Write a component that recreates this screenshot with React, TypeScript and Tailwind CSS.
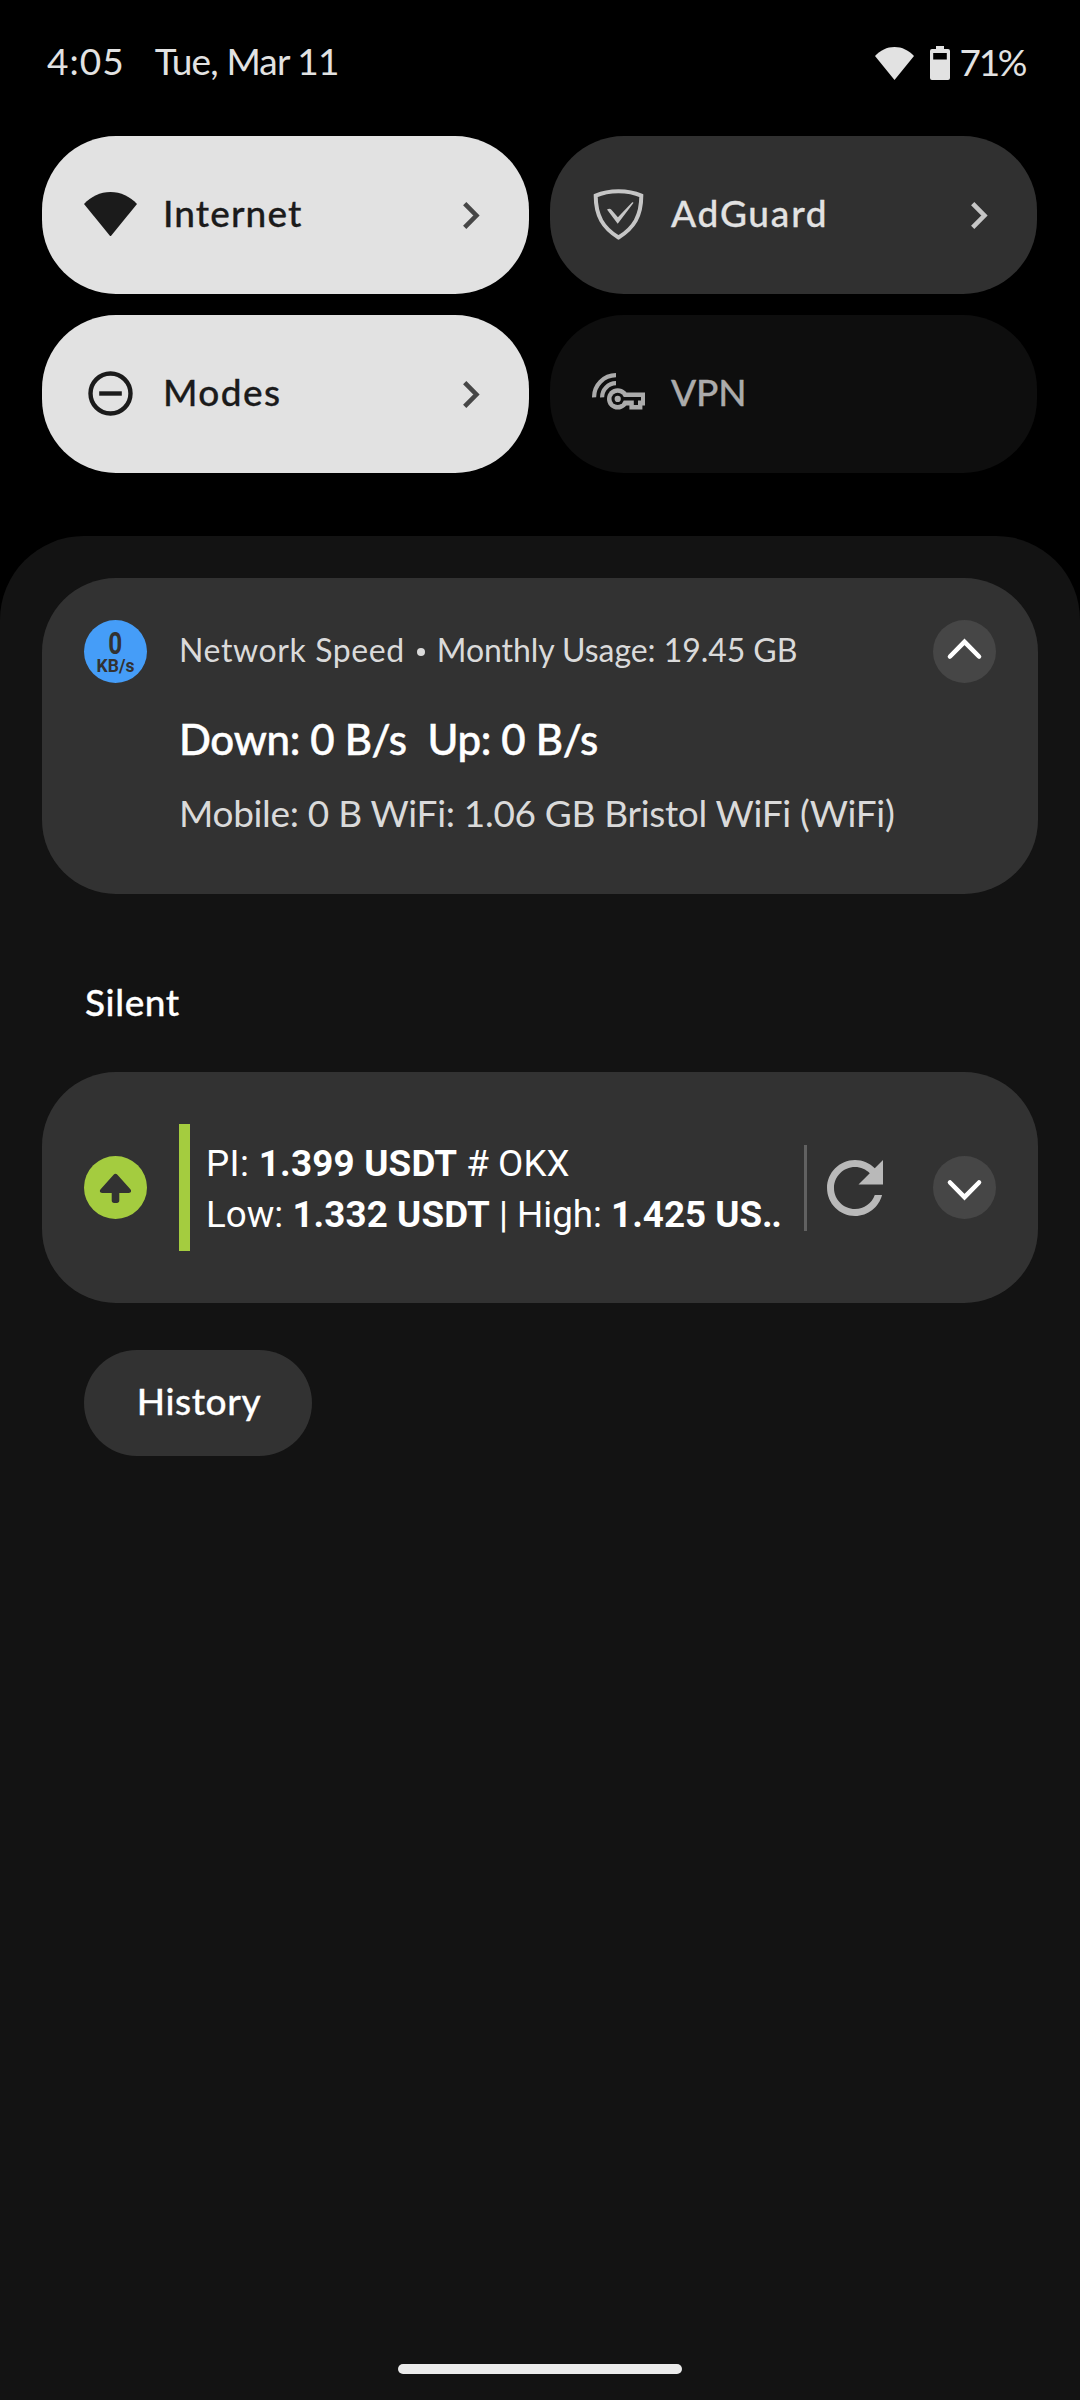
import type { ReactNode } from "react";
import clsx from "clsx";

function WifiIcon({ className }: { className?: string }) {
  return (
    <svg viewBox="0 0 53 44.5" className={className} fill="currentColor" preserveAspectRatio="none">
      <path d="M0 12C7 4.6 16.2 0 26.5 0S46 4.6 53 12L26.5 44.5z" />
    </svg>
  );
}

function BatteryIcon() {
  return (
    <svg viewBox="0 0 20 34" className="w-5 h-[34px]" fill="currentColor">
      <path
        fillRule="evenodd"
        d="M6 0h8v3h4a2 2 0 0 1 2 2v27a2 2 0 0 1-2 2H2a2 2 0 0 1-2-2V5a2 2 0 0 1 2-2h4zM3.2 7v6.4h13.6V7z"
      />
    </svg>
  );
}

function ModesIcon() {
  return (
    <svg viewBox="0 0 53 53" className="w-[53px] h-[53px] mb-[2px]" fill="none" stroke="currentColor" strokeWidth="4.4">
      <circle cx="26.5" cy="26.5" r="20" />
      <path d="M15.2 26.5h22.6" />
    </svg>
  );
}

function ShieldIcon() {
  return (
    <svg viewBox="0 0 53 53" className="w-[53px] h-[53px] mb-[2px]">
      <path
        d="M3.7 7.6C17 1.7 36 1.7 49.3 7.6C49.3 28 42 40 26.5 49.5C11 40 3.7 28 3.7 7.6z"
        fill="none"
        stroke="currentColor"
        strokeWidth="4"
      />
      <path
        d="M15 21.6c1.6-1.3 3.3-1.3 4.4.2l6.5 7.4L40 14.6c.6-.6 1.6-.5 1.4.4L25.7 35.8z"
        fill="currentColor"
      />
    </svg>
  );
}

function VpnIcon() {
  return (
    <svg viewBox="0 0 53 53" className="w-[53px] h-[53px] mb-[2px]">
      <g fill="none" stroke="currentColor" strokeWidth="4.2">
        <path d="M2.1 30.4A22 22 0 0 1 24 8.1" />
        <path d="M10.1 30.4A14 14 0 0 1 24 16.2" />
      </g>
      <circle cx="25.7" cy="31.9" r="10.7" fill="currentColor" />
      <path d="M31 25.4h22v13h-2.6v4h-13v-4H31z" fill="currentColor" />
      <circle cx="25.7" cy="31.9" r="6.2" fill="#0e0e0e" />
      <path d="M29 30h20v3.6h-3v4.4h-4.2v-4.4H29z" fill="#0e0e0e" />
      <circle cx="25.7" cy="31.9" r="3.1" fill="currentColor" />
    </svg>
  );
}

function ChevronRight() {
  return (
    <svg viewBox="0 0 17 27" className="w-[17px] h-[27px]" fill="none" stroke="currentColor" strokeWidth="4.6">
      <path d="M1.7 1.7L13.4 13.5L1.7 25.3" />
    </svg>
  );
}

function RefreshIcon() {
  return (
    <svg viewBox="0 0 24 24" className="w-[84px] h-[84px] shrink-0 text-[#b9b9b9]" fill="currentColor">
      <path d="M17.65 6.35C16.2 4.9 14.21 4 12 4c-4.42 0-7.99 3.58-7.99 8s3.57 8 7.99 8c3.73 0 6.84-2.55 7.73-6h-2.08c-.82 2.33-3.04 4-5.65 4-3.31 0-6-2.69-6-6s2.69-6 6-6c1.66 0 3.14.69 4.22 1.78L13 11h7V4l-2.35 2.35z" />
    </svg>
  );
}

function ExpandButton({ open }: { open?: boolean }) {
  return (
    <button className="w-[63px] h-[63px] shrink-0 rounded-full bg-[#464646] flex items-center justify-center">
      <svg
        viewBox="0 0 63 63"
        className={clsx("w-[63px] h-[63px]", open && "rotate-180")}
        fill="none"
        stroke="white"
        strokeWidth="4.6"
        strokeLinecap="round"
      >
        <path d="M17 26.5L31.5 41.2L46 26.5" />
      </svg>
    </button>
  );
}

type TileProps = {
  icon: ReactNode;
  label: string;
  tracking: string;
  variant: "on" | "off" | "disabled";
};

function Tile({ icon, label, tracking, variant }: TileProps) {
  return (
    <div
      className={clsx(
        "h-[158px] rounded-[74px] flex items-center pl-[42px] pr-[49px]",
        variant === "on" && "bg-[#e2e2e2] text-[#1b1b1b]",
        variant === "off" && "bg-[#303030] text-[#c6c6c6]",
        variant === "disabled" && "bg-[#0e0e0e] text-[#ababab]"
      )}
    >
      {icon}
      <span
        className={clsx(
          "ml-[26px] pb-1 text-[37px] font-medium [-webkit-text-stroke:0.3px_currentColor]",
          tracking,
          variant === "off" && "text-[#e2e2e2]"
        )}
      >
        {label}
      </span>
      {variant !== "disabled" && (
        <span className={clsx("ml-auto", variant === "on" && "text-[#464646]")}>
          <ChevronRight />
        </span>
      )}
    </div>
  );
}

export default function App() {
  return (
    <div className="w-[1080px] h-[2400px] bg-black flex flex-col font-['Lato',sans-serif] whitespace-nowrap overflow-hidden">
      <div className="h-[126px] pl-[47px] pr-[55px] flex items-center text-[37px] text-[#e2e2e2]">
        <span className="pb-1 tracking-[1px]">4:05</span>
        <span className="pb-1 ml-[30px] tracking-[-0.85px]">Tue, Mar 11</span>
        <div className="ml-auto flex items-center">
          <WifiIcon className="w-[39px] h-[33px]" />
          <span className="ml-4">
            <BatteryIcon />
          </span>
          <span className="pb-[2px] ml-[10px] tracking-[-2.4px]">71%</span>
        </div>
      </div>

      <div className="mt-[10px] px-[42px] grid grid-cols-[487px_487px] gap-x-[21px] gap-y-[21px]">
        <Tile icon={<WifiIcon className="w-[53px] h-[44.5px] mb-[2px]" />} label="Internet" tracking="tracking-[1.1px]" variant="on" />
        <Tile icon={<ShieldIcon />} label="AdGuard" tracking="tracking-[1.8px]" variant="off" />
        <Tile icon={<ModesIcon />} label="Modes" tracking="tracking-[1.4px]" variant="on" />
        <Tile icon={<VpnIcon />} label="VPN" tracking="tracking-[-0.2px]" variant="disabled" />
      </div>

      <div className="mt-[63px] flex-1 bg-[#131313] rounded-t-[84px] px-[42px] pt-[42px] flex flex-col">
        <div className="h-[316px] rounded-[74px] bg-[#323232] px-[42px] pt-[42px]">
          <div className="flex items-center h-[63px]">
            <div className="w-[63px] h-[63px] rounded-full bg-[#459df8] text-[#323232] flex flex-col items-center pt-[10px] font-['Roboto',sans-serif] font-bold">
              <span className="text-[32px] leading-[26px] scale-x-[0.76]">0</span>
              <span className="text-[17.5px] leading-[20px]">KB/s</span>
            </div>
            <div className="ml-8 pb-[3px] flex items-center text-[32px] text-[#dadada]">
              <span className="tracking-[0.6px]">Network Speed</span>
              <span className="mx-[12px] mt-1 w-[8px] h-[8px] rounded-full bg-[#dadada]" />
              <span className="tracking-[-0.06px]">Monthly Usage: 19.45 GB</span>
            </div>
            <div className="ml-auto">
              <ExpandButton open />
            </div>
          </div>
          <div className="ml-[95px] mt-[29px] text-[42px] leading-[54px] font-medium text-white tracking-[-0.3px] [-webkit-text-stroke:0.5px_currentColor]">
            Down: 0 B/s&nbsp; Up: 0 B/s
          </div>
          <div className="ml-[95px] mt-[23px] text-[37px] leading-[48px] text-[#dadada] tracking-[-0.31px]">
            Mobile: 0 B WiFi: 1.06 GB Bristol WiFi (WiFi)
          </div>
        </div>

        <h2 className="h-[178px] pt-[37px] pl-[43px] flex items-center text-[37px] font-medium text-white tracking-[0.6px] [-webkit-text-stroke:0.3px_currentColor]">
          Silent
        </h2>

        <div className="h-[231px] rounded-[74px] bg-[#323232] px-[42px] flex items-center">
          <svg viewBox="0 0 63 63" className="w-[63px] h-[63px] shrink-0">
            <circle cx="31.5" cy="31.5" r="31.5" fill="#a4cc3f" />
            <path
              d="M29.6 18.7c1.1-1.2 2.7-1.2 3.8 0l13 14.6c1.4 1.7.6 3.7-1.5 3.7h-9.6v7.5c0 1.6-.9 2.5-2.4 2.5h-2.8c-1.5 0-2.4-.9-2.4-2.5V37h-9.6c-2.1 0-2.9-2-1.5-3.7z"
              fill="#323232"
            />
          </svg>
          <div className="ml-8 w-[11px] h-[127px] shrink-0 bg-[#a4cc3f]" />
          <div className="ml-4 pt-[2px] w-[598px] shrink-0 font-['Roboto',sans-serif] text-[36.75px] leading-[51px] text-white">
            <div>
              <span className="tracking-[0.4px]">PI: </span>
              <b className="tracking-[0.2px]">1.399 USDT</b> # OKX
            </div>
            <div>
              Low: <b className="tracking-[0.1px]">1.332 USDT</b> | High:{" "}
              <b>
                1.425 US<span className="tracking-[-1.4px]">..</span>
              </b>
            </div>
          </div>
          <div className="w-[3px] h-[86px] shrink-0 bg-[#616161]" />
          <div className="ml-[6px] h-[84px]">
            <RefreshIcon />
          </div>
          <div className="ml-auto">
            <ExpandButton />
          </div>
        </div>

        <button className="mt-[47px] ml-[42px] pb-1 pl-[2px] w-[228px] h-[106px] rounded-full bg-[#323232] text-white text-[37px] font-medium tracking-[0.6px] [-webkit-text-stroke:0.3px_currentColor]">
          History
        </button>

        <div className="mt-auto mb-[26px] mx-auto w-[284px] h-[10px] rounded-full bg-[#ebebeb]" />
      </div>
    </div>
  );
}
